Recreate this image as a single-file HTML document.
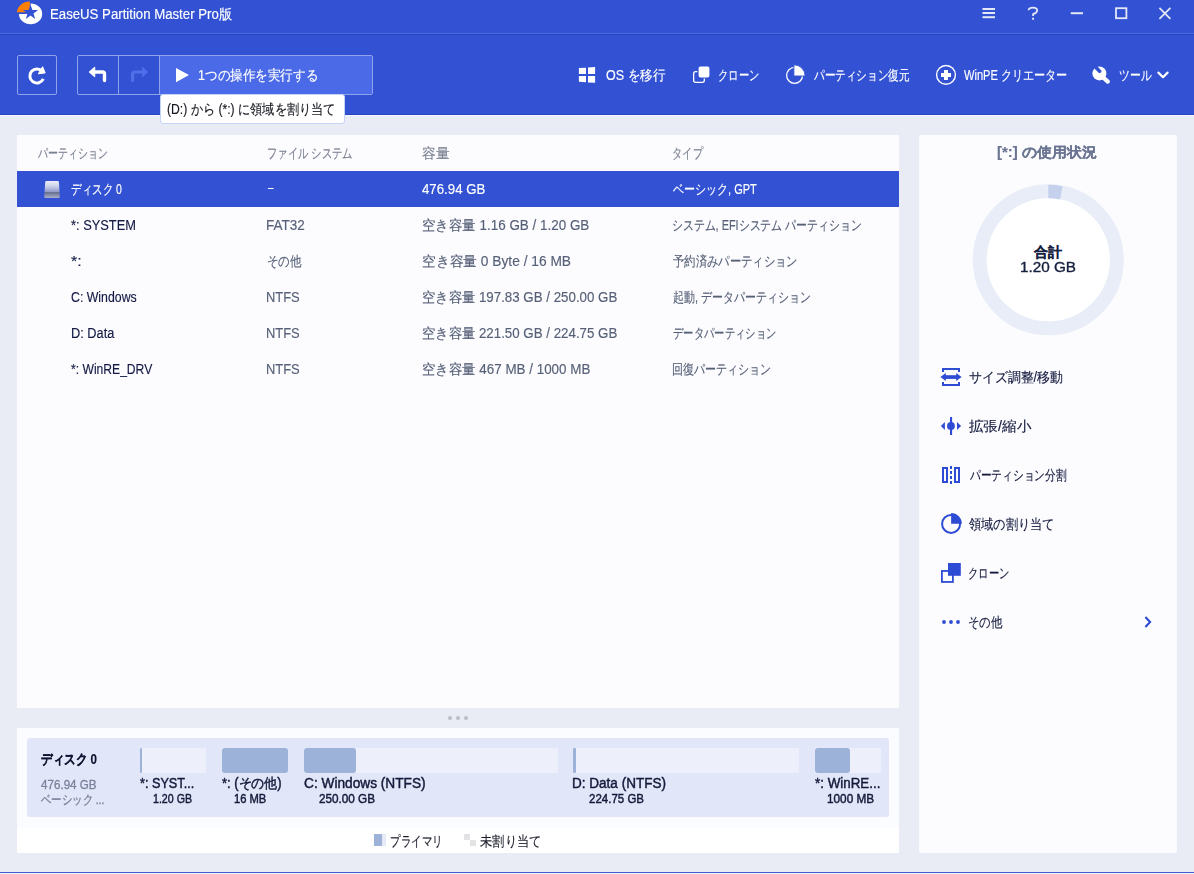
<!DOCTYPE html>
<html><head><meta charset="utf-8">
<style>
*{box-sizing:border-box;margin:0;padding:0}
html,body{width:1194px;height:874px;overflow:hidden}
body{position:relative;background:#e9ebf5;font-family:"Liberation Sans",sans-serif;font-size:14px;color:#1b2350}
.a{position:absolute;white-space:nowrap}
.t{line-height:1.15;-webkit-text-stroke:0.15px currentColor}
.w{color:#fff}
.btn{border:1px solid #8fa2ec;border-radius:2px}
.panel{background:#fcfcff}
.hdr{color:#7b8192}
.row{left:17px;width:882px;height:36px}
.sel{background:#3252d3}
.c1{color:#141a44}
.c2{color:#566077}
.st{color:#141a3e}
.bar{height:25px;background:#edf0fa;top:748px}
.used{position:absolute;left:0;top:0;height:25px;background:#9db2d8;border-radius:3px}
.dl{font-weight:normal;-webkit-text-stroke:0.45px #141a3a;color:#141a3a;font-size:14px}
.dg{font-size:12.5px;color:#7a819a;-webkit-text-stroke:0.3px #7a819a}
</style></head><body>

<!-- title bar -->
<div class="a" style="left:0;top:0;width:1194px;height:34px;background:#3252d3;border-bottom:1px solid #4a6ae6"></div>
<svg class="a" style="left:14px;top:0" width="32" height="28" viewBox="0 0 32 28">
  <path d="M16.6 3.55 A11.6 10.4 0 1 1 5 13.95 L16.6 13.95 Z" fill="#fff"/>
  <path d="M15.9 12.2 L3 12.2 A12.9 10.6 0 0 1 15.9 1.6 Z" fill="#ff8000"/>
  <path d="M16.5 4.5 L18.4 10.0 L24.1 10.0 L19.5 13.4 L21.2 19.0 L16.5 15.6 L11.8 19.0 L13.5 13.4 L8.9 10.0 L14.6 10.0 Z" fill="#3252d3"/>
</svg>

<div class="a" style="left:0;top:34px;width:1194px;height:1px;background:#2643b8"></div>
<!-- window controls -->
<svg class="a" style="left:960px;top:0" width="234" height="30" viewBox="0 0 234 30">
  <g fill="#e3e7f6">
    <rect x="22.5" y="8" width="12.5" height="2"/><rect x="22.5" y="12" width="12.5" height="2"/><rect x="22.5" y="16.2" width="12.5" height="2"/>
    <rect x="110.8" y="12.2" width="12.2" height="2"/>
  </g>
  <g fill="none" stroke="#e3e7f6" stroke-width="1.8">
    <path d="M68.6 10.2 Q68.6 7.6 72.9 7.6 Q77.2 7.6 77.2 10.4 Q77.2 12.6 73.1 14.2 L73.1 16"/>
    <rect x="156" y="8.2" width="10.4" height="10"/>
    <path d="M199.4 7.8 L210.4 18.8 M210.4 7.8 L199.4 18.8"/>
  </g>
  <rect x="72.1" y="17.7" width="2" height="2" fill="#e3e7f6"/>
</svg>

<!-- toolbar -->
<div class="a" style="left:0;top:35px;width:1194px;height:79px;background:#3252d3"></div>
<div class="a" style="left:0;top:114px;width:1194px;height:1px;background:#2645c8"></div>
<div class="a" style="left:0;top:115px;width:1194px;height:1px;background:#f4f6fa"></div>
<div class="a btn" style="left:17px;top:55px;width:40px;height:40px"></div>
<svg class="a" style="left:22px;top:60px" width="30" height="30" viewBox="0 0 30 30">
  <path d="M21.29 18.93 A7.05 7.05 0 1 1 20.3 11.42" fill="none" stroke="#fff" stroke-width="3"/>
  <path d="M20.6 6.7 L23.2 12.9 L16.3 13.8 Z" fill="#fff" stroke="#fff" stroke-width="1" stroke-linejoin="round"/>
</svg>
<div class="a btn" style="left:77px;top:55px;width:296px;height:40px"></div>
<div class="a" style="left:160px;top:56px;width:212px;height:38px;background:#4a6ae8"></div>
<div class="a" style="left:118px;top:55px;width:1px;height:40px;background:#8fa2ec"></div>
<div class="a" style="left:159px;top:55px;width:1px;height:40px;background:#8fa2ec"></div>
<svg class="a" style="left:84px;top:60px" width="30" height="30" viewBox="0 0 30 30">
  <path d="M9 12 H18.5 Q20.5 12 20.5 14 V20.6" fill="none" stroke="#fff" stroke-width="3.4" stroke-linecap="round" stroke-linejoin="round"/>
  <path d="M5 12 L10.8 7 L10.8 17 Z" fill="#fff" stroke="#fff" stroke-width="0.8" stroke-linejoin="round"/>
</svg>
<svg class="a" style="left:118px;top:60px" width="32" height="30" viewBox="0 0 32 30">
  <path d="M25.5 12 H16.6 Q14.6 12 14.6 14 V20.4" fill="none" stroke="#5070ea" stroke-width="3.2" stroke-linecap="round" stroke-linejoin="round"/>
  <path d="M29.6 12 L24.4 7.2 L24.4 16.8 Z" fill="#5070ea" stroke="#5070ea" stroke-width="0.8" stroke-linejoin="round"/>
</svg>
<svg class="a" style="left:170px;top:60px" width="30" height="30" viewBox="0 0 30 30">
  <path d="M6 8 L19 15 L6 22.2 Z" fill="#fff"/>
</svg>
<div class="a" style="left:160px;top:94px;width:185px;height:30px;background:#fff;border:1px solid #c5d3f6;border-radius:3px"></div>

<!-- right toolbar icons -->
<svg class="a" style="left:574px;top:62px" width="26" height="26" viewBox="0 0 26 26">
  <g fill="#fff"><path d="M4.9 6 L12 5.7 V12 H4.9 Z"/><path d="M14 5.5 L21.1 5.1 V12 H14 Z"/><path d="M4.9 14 H12 V20.2 L4.9 19.8 Z"/><path d="M14 14 H21.1 V20.8 L14 20.4 Z"/></g>
</svg>
<svg class="a" style="left:688px;top:60px" width="30" height="30" viewBox="0 0 30 30">
  <rect x="5.65" y="11.65" width="10.7" height="10.7" rx="2" fill="none" stroke="#fff" stroke-width="1.3"/>
  <rect x="10" y="6" width="12" height="12" rx="2.2" fill="#fff" stroke="#3252d3" stroke-width="1.2"/>
</svg>
<svg class="a" style="left:780px;top:60px" width="30" height="30" viewBox="0 0 30 30">
  <circle cx="14.6" cy="15.4" r="7.95" fill="none" stroke="#fff" stroke-width="1.3"/>
  <path d="M13.9 16 V4.8 A11.2 11.2 0 0 1 25.1 16 Z" fill="#fff" stroke="#3252d3" stroke-width="0.9"/>
</svg>
<svg class="a" style="left:930px;top:60px" width="30" height="30" viewBox="0 0 30 30">
  <circle cx="16" cy="14.9" r="9.4" fill="none" stroke="#fff" stroke-width="1.4"/>
  <path d="M14 10 H18 V13 H21 V17 H18 V20 H14 V17 H11 V13 H14 Z" fill="#fff"/>
</svg>
<svg class="a" style="left:1086px;top:60px" width="30" height="30" viewBox="0 0 30 30">
  <defs><mask id="wm"><rect width="30" height="30" fill="#fff"/><path d="M9.5 7 L13.6 11.2" stroke="#000" stroke-width="3.6" stroke-linecap="round"/></mask></defs>
  <circle cx="13.4" cy="13.4" r="7" fill="#fff" mask="url(#wm)"/>
  <path d="M15 15.5 L21.8 21.6" stroke="#fff" stroke-width="4.2" stroke-linecap="round"/>
</svg>
<svg class="a" style="left:1150px;top:60px" width="26" height="30" viewBox="0 0 26 30">
  <path d="M8.4 12.6 L13 17.2 L17.6 12.6" fill="none" stroke="#fff" stroke-width="2.2" stroke-linecap="round" stroke-linejoin="round"/>
</svg>

<!-- partition table panel -->
<div class="a panel" style="left:17px;top:135px;width:882px;height:573px"></div>
<div class="a row sel" style="top:171px"></div>
<svg class="a" style="left:44px;top:181px" width="17" height="17" viewBox="0 0 17 17">
  <defs><linearGradient id="dg" x1="0" y1="0" x2="0" y2="1"><stop offset="0" stop-color="#eceef9"/><stop offset="0.3" stop-color="#cdd2ea"/><stop offset="0.62" stop-color="#959dcb"/><stop offset="0.68" stop-color="#687092"/><stop offset="1" stop-color="#a9b0cc"/></linearGradient></defs>
  <path d="M2.4 0 H13.8 Q14.9 0 14.95 1.2 L15.8 15.8 Q15.8 17 14.6 17 H1.4 Q0.2 17 0.2 15.8 L1.2 1.2 Q1.3 0 2.4 0 Z" fill="url(#dg)"/>
</svg>

<!-- drag handle -->
<svg class="a" style="left:446px;top:714px" width="24" height="8" viewBox="0 0 24 8">
  <g fill="#bcbdc8"><circle cx="4" cy="4" r="2"/><circle cx="12" cy="4" r="2"/><circle cx="20" cy="4" r="2"/></g>
</svg>

<!-- disk map panel -->
<div class="a" style="left:17px;top:728px;width:882px;height:125px;background:#fff"></div>
<div class="a" style="left:17px;top:728px;width:882px;height:100px;background:#fbfcff"></div>
<div class="a" style="left:27px;top:738px;width:862px;height:79px;background:#e1e6f8;border-radius:3px"></div>
<div class="a bar" style="left:140px;width:66px"><div class="used" style="width:2px;border-radius:1px"></div></div>
<div class="a bar" style="left:222px;width:66px;background:#9db2d8;border-radius:3px"></div>
<div class="a bar" style="left:304px;width:254px"><div class="used" style="width:52px"></div></div>
<div class="a bar" style="left:573px;width:226px"><div class="used" style="width:3px;border-radius:1px"></div></div>
<div class="a bar" style="left:815px;width:66px"><div class="used" style="width:35px"></div></div>

<!-- legend -->
<div class="a" style="left:374px;top:834px;width:8px;height:12px;background:#9db2d8"></div>
<div class="a" style="left:382px;top:834px;width:4px;height:12px;background:#e6eaf7"></div>
<div class="a" style="left:464px;top:834px;width:6px;height:6px;background:#e3e3e6"></div>
<div class="a" style="left:470px;top:840px;width:6px;height:6px;background:#e3e3e6"></div>

<!-- right panel -->
<div class="a panel" style="left:919px;top:135px;width:258px;height:718px;border-radius:3px"></div>
<svg class="a" style="left:968px;top:180px" width="160" height="160" viewBox="0 0 160 160">
  <circle cx="80.3" cy="79.8" r="68.5" fill="none" stroke="#e9edf7" stroke-width="14"/>
  <circle cx="80.3" cy="79.8" r="61.5" fill="#fff"/>
  <path d="M80.3 4.8 A75 75 0 0 1 94.61 6.18 L92.03 19.43 A61.5 61.5 0 0 0 80.3 18.3 Z" fill="#c4d0ec"/>
</svg>

<!-- actions -->
<svg class="a" style="left:937px;top:364px" width="28" height="26" viewBox="0 0 28 26">
  <g fill="#2e4bd4">
    <rect x="5" y="4" width="18" height="2"/><rect x="5" y="4" width="2" height="4"/><rect x="21" y="4" width="2" height="4"/>
    <rect x="5" y="20" width="18" height="2"/><rect x="5" y="18" width="2" height="4"/><rect x="21" y="18" width="2" height="4"/>
    <rect x="8" y="11.2" width="12" height="3.7"/>
    <path d="M3.4 13 L8.8 8.9 V17.1 Z"/><path d="M24.6 13 L19.2 8.9 V17.1 Z"/>
  </g>
</svg>
<svg class="a" style="left:937px;top:412px" width="28" height="28" viewBox="0 0 28 28">
  <g fill="#2e4bd4">
    <rect x="13" y="5" width="2.1" height="18"/>
    <circle cx="13.95" cy="13.9" r="3.9"/>
    <path d="M3.85 13.9 L7.9 9.9 V17.9 Z"/><path d="M24.05 13.9 L20 9.9 V17.9 Z"/>
  </g>
</svg>
<svg class="a" style="left:938px;top:462px" width="26" height="26" viewBox="0 0 26 26">
  <g fill="none" stroke="#2e4bd4" stroke-width="2">
    <rect x="5" y="6" width="4" height="14"/><rect x="17" y="6" width="4" height="14"/>
  </g>
  <g fill="#2e4bd4"><rect x="12" y="4" width="2" height="3"/><rect x="12" y="9" width="2" height="3"/><rect x="12" y="14" width="2" height="3"/><rect x="12" y="19" width="2" height="3"/></g>
</svg>
<svg class="a" style="left:937px;top:509px" width="28" height="28" viewBox="0 0 28 28">
  <circle cx="14.1" cy="14.9" r="9" fill="none" stroke="#2e4bd4" stroke-width="2"/>
  <path d="M14.1 14.75 V4 A10.8 10.8 0 0 1 24.9 14.75 Z" fill="#2e4bd4"/>
</svg>
<svg class="a" style="left:937px;top:559px" width="28" height="28" viewBox="0 0 28 28">
  <rect x="4.9" y="11.95" width="11" height="11" fill="none" stroke="#2e4bd4" stroke-width="1.8"/>
  <rect x="11" y="4" width="12.8" height="12.8" fill="#2e4bd4"/>
</svg>
<svg class="a" style="left:937px;top:610px" width="28" height="24" viewBox="0 0 28 24">
  <g fill="#2e4bd4"><circle cx="7" cy="12" r="1.9"/><circle cx="14" cy="12" r="1.9"/><circle cx="21" cy="12" r="1.9"/></g>
</svg>
<svg class="a" style="left:1136px;top:610px" width="24" height="24" viewBox="0 0 24 24">
  <path d="M9.4 7 L14.1 12 L9.4 17" fill="none" stroke="#2e4bd4" stroke-width="2.1"/>
</svg>

<!-- bottom window line -->
<div class="a" style="left:0;top:872px;width:1194px;height:1px;background:#3e5ad8"></div>
<div class="a" style="left:0;top:873px;width:1194px;height:1px;background:#f4f4f8"></div>

<div class="a t w" style="left:50.06px;transform-origin:0 0;transform:scaleX(0.9429);top:6px;--tx:51;--tw:181;">EaseUS Partition Master Pro版</div>
<div class="a t w" style="left:198.1px;transform-origin:0 0;transform:scaleX(0.8984);top:67px;--tx:199;--tw:118.4;">1つの操作を実行する</div>
<div class="a t " style="left:167px;transform-origin:0 0;transform:scaleX(0.8694);top:101px;--tx:167;--tw:167.5;color:#15171f">(D:) から (*:) に領域を割り当て</div>
<div class="a t w" style="left:605.8px;transform-origin:0 0;transform:scaleX(0.8924);top:67px;--tx:605.8;--tw:59;">OS を移行</div>
<div class="a t w" style="left:718.16px;transform-origin:0 0;transform:scaleX(0.7407);top:67px;--tx:718.9;--tw:40;">クローン</div>
<div class="a t w" style="left:814.06px;transform-origin:0 0;transform:scaleX(0.7583);top:67px;--tx:813.3;--tw:96.3;">パーティション復元</div>
<div class="a t w" style="left:963.6px;transform-origin:0 0;transform:scaleX(0.7927);top:67px;--tx:963.6;--tw:102.8;">WinPE クリエーター</div>
<div class="a t w" style="left:1118.8px;transform-origin:0 0;transform:scaleX(0.7714);top:67px;--tx:1118.8;--tw:32.4;">ツール</div>
<div class="a t hdr" style="left:37.71px;transform-origin:0 0;transform:scaleX(0.7092);top:144.5px;--tx:37;--tw:69.5;">パーティション</div>
<div class="a t hdr" style="left:266.56px;transform-origin:0 0;transform:scaleX(0.7398);top:144.5px;--tx:267.3;--tw:85;">ファイル システム</div>
<div class="a t hdr" style="left:422.4px;transform-origin:0 0;transform:scaleX(0.9857);top:144.5px;--tx:422.4;--tw:27.6;">容量</div>
<div class="a t hdr" style="left:671.77px;transform-origin:0 0;transform:scaleX(0.7333);top:144.5px;--tx:672.5;--tw:30.8;">タイプ</div>
<div class="a t w" style="left:70.8px;transform-origin:0 0;transform:scaleX(0.7512);top:181px;--tx:70.8;--tw:51;">ディスク 0</div>
<div class="a t w" style="left:267.6px;transform-origin:0 0;transform:scaleX(0.7);top:179px;--tx:267.6;--tw:5.6;">–</div>
<div class="a t w" style="left:422.2px;transform-origin:0 0;transform:scaleX(0.946);top:181px;--tx:422.2;--tw:63;">476.94 GB</div>
<div class="a t w" style="left:672.5px;transform-origin:0 0;transform:scaleX(0.7869);top:181px;--tx:672.5;--tw:84.2;">ベーシック, GPT</div>
<div class="a t c1" style="left:70.8px;transform-origin:0 0;transform:scaleX(0.9169);top:217px;--tx:70.8;--tw:64.3;">*: SYSTEM</div>
<div class="a t c2" style="left:266.44px;transform-origin:0 0;transform:scaleX(0.9641);top:217px;--tx:267.4;--tw:38;">FAT32</div>
<div class="a t c2" style="left:422.2px;transform-origin:0 0;transform:scaleX(0.96);top:217px;--tx:422.2;--tw:167;">空き容量 1.16 GB / 1.20 GB</div>
<div class="a t c2" style="left:671.72px;transform-origin:0 0;transform:scaleX(0.7786);top:217px;--tx:672.5;--tw:188;">システム, EFIシステム パーティション</div>
<div class="a t c1" style="left:70.8px;transform-origin:0 0;transform:scaleX(1.1363);top:253px;--tx:70.8;--tw:9.6;">*:</div>
<div class="a t c2" style="left:266.58px;transform-origin:0 0;transform:scaleX(0.8195);top:253px;--tx:267.4;--tw:33.6;">その他</div>
<div class="a t c2" style="left:422.2px;transform-origin:0 0;transform:scaleX(0.9823);top:253px;--tx:422.2;--tw:148.7;">空き容量 0 Byte / 16 MB</div>
<div class="a t c2" style="left:672.5px;transform-origin:0 0;transform:scaleX(0.8105);top:253px;--tx:672.5;--tw:124;">予約済みパーティション</div>
<div class="a t c1" style="left:70.8px;transform-origin:0 0;transform:scaleX(0.8797);top:289px;--tx:70.8;--tw:65.7;">C: Windows</div>
<div class="a t c2" style="left:266.48px;transform-origin:0 0;transform:scaleX(0.9229);top:289px;--tx:267.4;--tw:32.5;">NTFS</div>
<div class="a t c2" style="left:422.2px;transform-origin:0 0;transform:scaleX(0.9508);top:289px;--tx:422.2;--tw:195;">空き容量 197.83 GB / 250.00 GB</div>
<div class="a t c2" style="left:672.5px;transform-origin:0 0;transform:scaleX(0.7827);top:289px;--tx:672.5;--tw:136.8;">起動, データパーティション</div>
<div class="a t c1" style="left:70.59px;transform-origin:0 0;transform:scaleX(0.9127);top:325px;--tx:71.5;--tw:42.6;">D: Data</div>
<div class="a t c2" style="left:266.48px;transform-origin:0 0;transform:scaleX(0.9229);top:325px;--tx:267.4;--tw:32.5;">NTFS</div>
<div class="a t c2" style="left:422.2px;transform-origin:0 0;transform:scaleX(0.9508);top:325px;--tx:422.2;--tw:195;">空き容量 221.50 GB / 224.75 GB</div>
<div class="a t c2" style="left:672.5px;transform-origin:0 0;transform:scaleX(0.7381);top:325px;--tx:672.5;--tw:102.6;">データパーティション</div>
<div class="a t c1" style="left:70.8px;transform-origin:0 0;transform:scaleX(0.8652);top:361px;--tx:70.8;--tw:81.8;">*: WinRE_DRV</div>
<div class="a t c2" style="left:266.48px;transform-origin:0 0;transform:scaleX(0.9229);top:361px;--tx:267.4;--tw:32.5;">NTFS</div>
<div class="a t c2" style="left:422.2px;transform-origin:0 0;transform:scaleX(0.9572);top:361px;--tx:422.2;--tw:168;">空き容量 467 MB / 1000 MB</div>
<div class="a t c2" style="left:671.71px;transform-origin:0 0;transform:scaleX(0.7863);top:361px;--tx:672.5;--tw:97.5;">回復パーティション</div>
<div class="a t dl" style="left:41.4px;transform-origin:0 0;transform:scaleX(0.8249);top:751px;--tx:41.4;--tw:56;font-weight:bold;-webkit-text-stroke:0.2px #0f1430;color:#0f1430">ディスク 0</div>
<div class="a t dg" style="left:41.4px;transform-origin:0 0;transform:scaleX(0.9305);top:778px;--tx:41.4;--tw:55.3;">476.94 GB</div>
<div class="a t dg" style="left:41.4px;transform-origin:0 0;transform:scaleX(0.8008);top:793px;--tx:41.4;--tw:62.8;">ベーシック ...</div>
<div class="a t dl" style="left:140px;transform-origin:0 0;transform:scaleX(0.9048);top:775px;--tx:140;--tw:53.4;">*: SYST...</div>
<div class="a t dl" style="left:152.7px;transform-origin:0 0;transform:scaleX(0.8501);top:792px;--tx:152.7;--tw:38.7;font-size:12.5px">1.20 GB</div>
<div class="a t dl" style="left:222.3px;transform-origin:0 0;transform:scaleX(0.9235);top:775px;--tx:222.3;--tw:59;">*: (その他)</div>
<div class="a t dl" style="left:234.4px;transform-origin:0 0;transform:scaleX(0.8941);top:792px;--tx:234.4;--tw:32;font-size:12.5px">16 MB</div>
<div class="a t dl" style="left:304px;transform-origin:0 0;transform:scaleX(0.9775);top:775px;--tx:304;--tw:121;">C: Windows (NTFS)</div>
<div class="a t dl" style="left:319px;transform-origin:0 0;transform:scaleX(0.9373);top:792px;--tx:319;--tw:55.7;font-size:12.5px">250.00 GB</div>
<div class="a t dl" style="left:572.03px;transform-origin:0 0;transform:scaleX(0.9669);top:775px;--tx:573;--tw:92.4;">D: Data (NTFS)</div>
<div class="a t dl" style="left:589.3px;transform-origin:0 0;transform:scaleX(0.9204);top:792px;--tx:589.3;--tw:54.7;font-size:12.5px">224.75 GB</div>
<div class="a t dl" style="left:815px;transform-origin:0 0;transform:scaleX(0.9546);top:775px;--tx:815;--tw:64.5;">*: WinRE...</div>
<div class="a t dl" style="left:827px;transform-origin:0 0;transform:scaleX(0.9418);top:792px;--tx:827;--tw:46.8;font-size:12.5px">1000 MB</div>
<div class="a t " style="left:390.25px;transform-origin:0 0;transform:scaleX(0.7515);top:833px;--tx:391;--tw:49.6;color:#1b1e2a">プライマリ</div>
<div class="a t " style="left:480px;transform-origin:0 0;transform:scaleX(0.8754);top:833px;--tx:480;--tw:60.4;color:#1b1e2a">未割り当て</div>
<div class="a t " style="left:997px;transform-origin:0 0;transform:scaleX(1.0715);top:144px;--tx:997;--tw:100;font-weight:bold;color:#6b7592">[*:] の使用状況</div>
<div class="a t " style="left:1034px;transform-origin:0 0;transform:scaleX(1);top:244px;--tx:1033;--tw:29;color:#16203f;font-weight:bold">合計</div>
<div class="a t " style="left:1019.61px;transform-origin:0 0;transform:scaleX(1.0914);top:259px;--tx:1020.7;--tw:54.6;color:#16203f;-webkit-text-stroke:0.35px #16203f">1.20 GB</div>
<div class="a t st" style="left:969px;transform-origin:0 0;transform:scaleX(0.9226);top:369px;--tx:969;--tw:94;">サイズ調整/移動</div>
<div class="a t st" style="left:969px;transform-origin:0 0;transform:scaleX(1.0352);top:418px;--tx:969;--tw:62;">拡張/縮小</div>
<div class="a t st" style="left:969.77px;transform-origin:0 0;transform:scaleX(0.7661);top:467px;--tx:969;--tw:97.3;">パーティション分割</div>
<div class="a t st" style="left:969px;transform-origin:0 0;transform:scaleX(0.8732);top:516px;--tx:969;--tw:84.7;">領域の割り当て</div>
<div class="a t st" style="left:968.26px;transform-origin:0 0;transform:scaleX(0.7407);top:565px;--tx:969;--tw:40;">クローン</div>
<div class="a t st" style="left:968.18px;transform-origin:0 0;transform:scaleX(0.8195);top:614px;--tx:969;--tw:33.6;">その他</div>

<script>
(function(){
  var c=document.createElement('canvas').getContext('2d');
  var els=document.querySelectorAll('.t');
  for(var i=0;i<els.length;i++){
    var e=els[i], cs=getComputedStyle(e);
    var tw=parseFloat(cs.getPropertyValue('--tw'));
    if(!tw) continue;
    c.font=cs.fontStyle+' '+cs.fontWeight+' '+cs.fontSize+' '+cs.fontFamily;
    var m=c.measureText(e.textContent);
    var ink=m.actualBoundingBoxLeft+m.actualBoundingBoxRight;
    if(!(ink>0)) continue;
    var s=tw/ink;
    var x=parseFloat(cs.getPropertyValue('--tx'));
    if(isNaN(x)) x=parseFloat(cs.left);
    e.style.transformOrigin='0 0';
    e.style.transform='scaleX('+s.toFixed(4)+')';
    e.style.left=(x+m.actualBoundingBoxLeft*s).toFixed(2)+'px';
  }
})();
</script>
</body></html>
